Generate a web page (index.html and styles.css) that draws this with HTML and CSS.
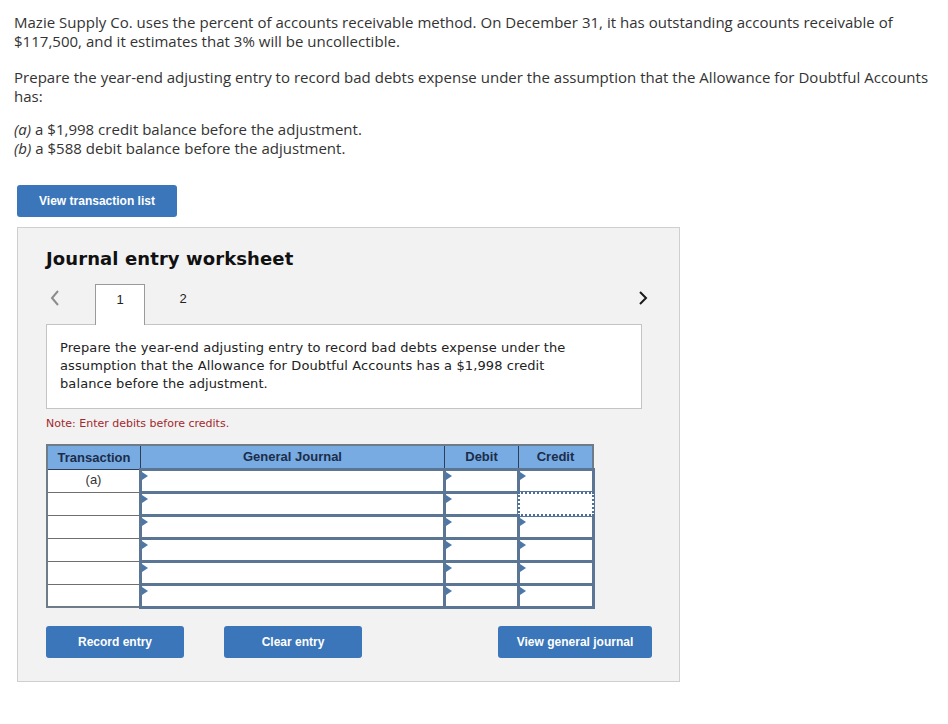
FILE: index.html
```html
<!DOCTYPE html>
<html lang="en">
<head>
  <meta charset="UTF-8">
  <title>Journal entry worksheet</title>
  <link rel="stylesheet" href="styles.css">
</head>
<body>
  <div class="question">
    <p class="intro">Mazie Supply Co. uses the percent of accounts receivable method. On December 31, it has outstanding accounts receivable of $117,500, and it estimates that 3% will be uncollectible.</p>
    <p class="task">Prepare the year-end adjusting entry to record bad debts expense under the assumption that the Allowance for Doubtful Accounts has:</p>
    <p class="parts"><i>(a)</i> a $1,998 credit balance before the adjustment.<br><i>(b)</i> a $588 debit balance before the adjustment.</p>
  </div>

  <button class="btn btn-list">View transaction list</button>

  <div class="worksheet">
    <h2>Journal entry worksheet</h2>

    <div class="tabs">
      <span class="arrow prev">
        <svg width="10" height="16" viewBox="0 0 10 16"><path d="M8 1 L2 8 L8 15" fill="none" stroke="#8c8c8c" stroke-width="2"/></svg>
      </span>
      <span class="tab active">1</span>
      <span class="tab">2</span>
      <span class="arrow next">
        <svg width="10" height="16" viewBox="0 0 10 16"><path d="M2 2 L8 8 L2 14" fill="none" stroke="#1a1a1a" stroke-width="2"/></svg>
      </span>
    </div>

    <div class="instruction">
      Prepare the year-end adjusting entry to record bad debts expense under the assumption that the Allowance for Doubtful Accounts has a $1,998 credit balance before the adjustment.
    </div>

    <p class="note">Note: Enter debits before credits.</p>

    <table class="journal">
      <thead>
        <tr>
          <th class="c-trans">Transaction</th>
          <th class="c-gj">General Journal</th>
          <th class="c-amt">Debit</th>
          <th class="c-amt">Credit</th>
        </tr>
      </thead>
      <tbody>
        <tr><td class="trans">(a)</td><td class="cell"></td><td class="cell"></td><td class="cell"></td></tr>
        <tr><td class="trans"></td><td class="cell"></td><td class="cell"></td><td class="cell focus"></td></tr>
        <tr><td class="trans"></td><td class="cell"></td><td class="cell"></td><td class="cell"></td></tr>
        <tr><td class="trans"></td><td class="cell"></td><td class="cell"></td><td class="cell"></td></tr>
        <tr><td class="trans"></td><td class="cell"></td><td class="cell"></td><td class="cell"></td></tr>
        <tr><td class="trans"></td><td class="cell"></td><td class="cell"></td><td class="cell"></td></tr>
      </tbody>
    </table>

    <div class="actions">
      <button class="btn">Record entry</button>
      <button class="btn">Clear entry</button>
      <button class="btn wide">View general journal</button>
    </div>
  </div>
</body>
</html>
```

FILE: styles.css
```css
body {
  margin: 0;
  padding: 13px 14px 0 14px;
  font-family: "Open Sans", Arial, sans-serif;
  color: #333;
  background: #fff;
}

.question p {
  margin: 0;
  font-size: 15px;
  line-height: 18.5px;
  letter-spacing: 0.02px;
}

.question .intro { margin-bottom: 18px; }
.question .task { margin-bottom: 15px; }
.question .parts { margin-bottom: 28px; }

.btn {
  font-family: "Liberation Sans", Arial, sans-serif;
  font-weight: bold;
  font-size: 12px;
  color: #fff;
  background-color: #3a76b9;
  border: none;
  border-radius: 3px;
  height: 32px;
  padding: 0;
  cursor: pointer;
}

.btn-list {
  margin-left: 3px;
  width: 160px;
  display: block;
}

.worksheet {
  margin: 10px 0 0 3px;
  width: 633px;
  height: 453px;
  background: #f2f2f2;
  border: 1px solid #cfcfcf;
  padding: 0 0 0 28px;
  font-family: "DejaVu Sans", sans-serif;
}

.worksheet h2 {
  margin: 19px 0 0 0;
  font-size: 18px;
  line-height: 24px;
  letter-spacing: 0.1px;
  color: #111;
}

.tabs {
  display: flex;
  align-items: flex-end;
  margin-top: 13px;
  height: 40px;
  width: 595px;
}

.tab {
  width: 48px;
  height: 40px;
  line-height: 30px;
  text-align: center;
  font-family: "Liberation Sans", Arial, sans-serif;
  font-size: 13px;
  color: #222;
}

.tab.active {
  background: #fff;
  border: 1px solid #9a9a9a;
  border-bottom: none;
  margin-left: 35px;
  margin-bottom: -1px;
  height: 40px;
  position: relative;
  z-index: 1;
}

.tab + .tab {
  margin-left: 14px;
}

.arrow {
  align-self: flex-start;
  margin-top: 6px;
  height: 16px;
}

.arrow.prev {
  margin-left: 4px;
}

.arrow.next {
  margin-left: auto;
  margin-right: -7px;
}

.instruction {
  width: 531px;
  height: 53px;
  background: #fff;
  border: 1px solid #c4c4c4;
  padding: 14px 50px 16px 13px;
  font-size: 13px;
  line-height: 18px;
  letter-spacing: 0.1px;
  color: #222;
}

.note {
  margin: 8px 0 0 0;
  font-size: 11px;
  line-height: 14px;
  color: #a3282c;
}

.journal {
  margin-top: 13px;
  border-collapse: collapse;
  border: 2px solid #6e7b88;
  font-family: "Liberation Sans", Arial, sans-serif;
  font-size: 13px;
}

.journal thead tr {
  height: 24px;
}

.journal th {
  background: #78abe2;
  color: #1c2d4a;
  font-weight: bold;
  padding: 0;
  border-right: 1px solid #2e3e55;
  border-bottom: 1px solid #2e3e55;
}

.journal .c-trans { width: 92px; }
.journal .c-gj { width: 303px; }
.journal .c-amt { width: 73px; }

.journal tbody tr {
  height: 23px;
}

.journal td {
  padding: 0;
  background: #fff;
}

.journal .trans {
  border-bottom: 1px solid #6f6f6f;
  text-align: center;
  color: #333;
  vertical-align: top;
  line-height: 20px;
}

.journal .cell {
  border: 3px solid #5b7594;
  position: relative;
}

.journal .cell::before {
  content: "";
  position: absolute;
  left: 0;
  top: 1px;
  border-left: 6px solid #4b77aa;
  border-top: 4px solid transparent;
  border-bottom: 4px solid transparent;
}

.journal .cell.focus::before {
  display: none;
}

/* keyboard focus ring drawn over the cell border */
.journal .cell.focus::after {
  content: "";
  position: absolute;
  left: -2px;
  top: -2px;
  right: -2px;
  bottom: -2px;
  background: #fff;
  border: 2px dotted #4c6f98;
}

.actions {
  display: flex;
  margin-top: 17px;
  width: 606px;
}

.actions .btn {
  width: 138px;
  margin-right: 40px;
}

.actions .btn.wide {
  width: 154px;
  margin: 0 0 0 auto;
}
```
